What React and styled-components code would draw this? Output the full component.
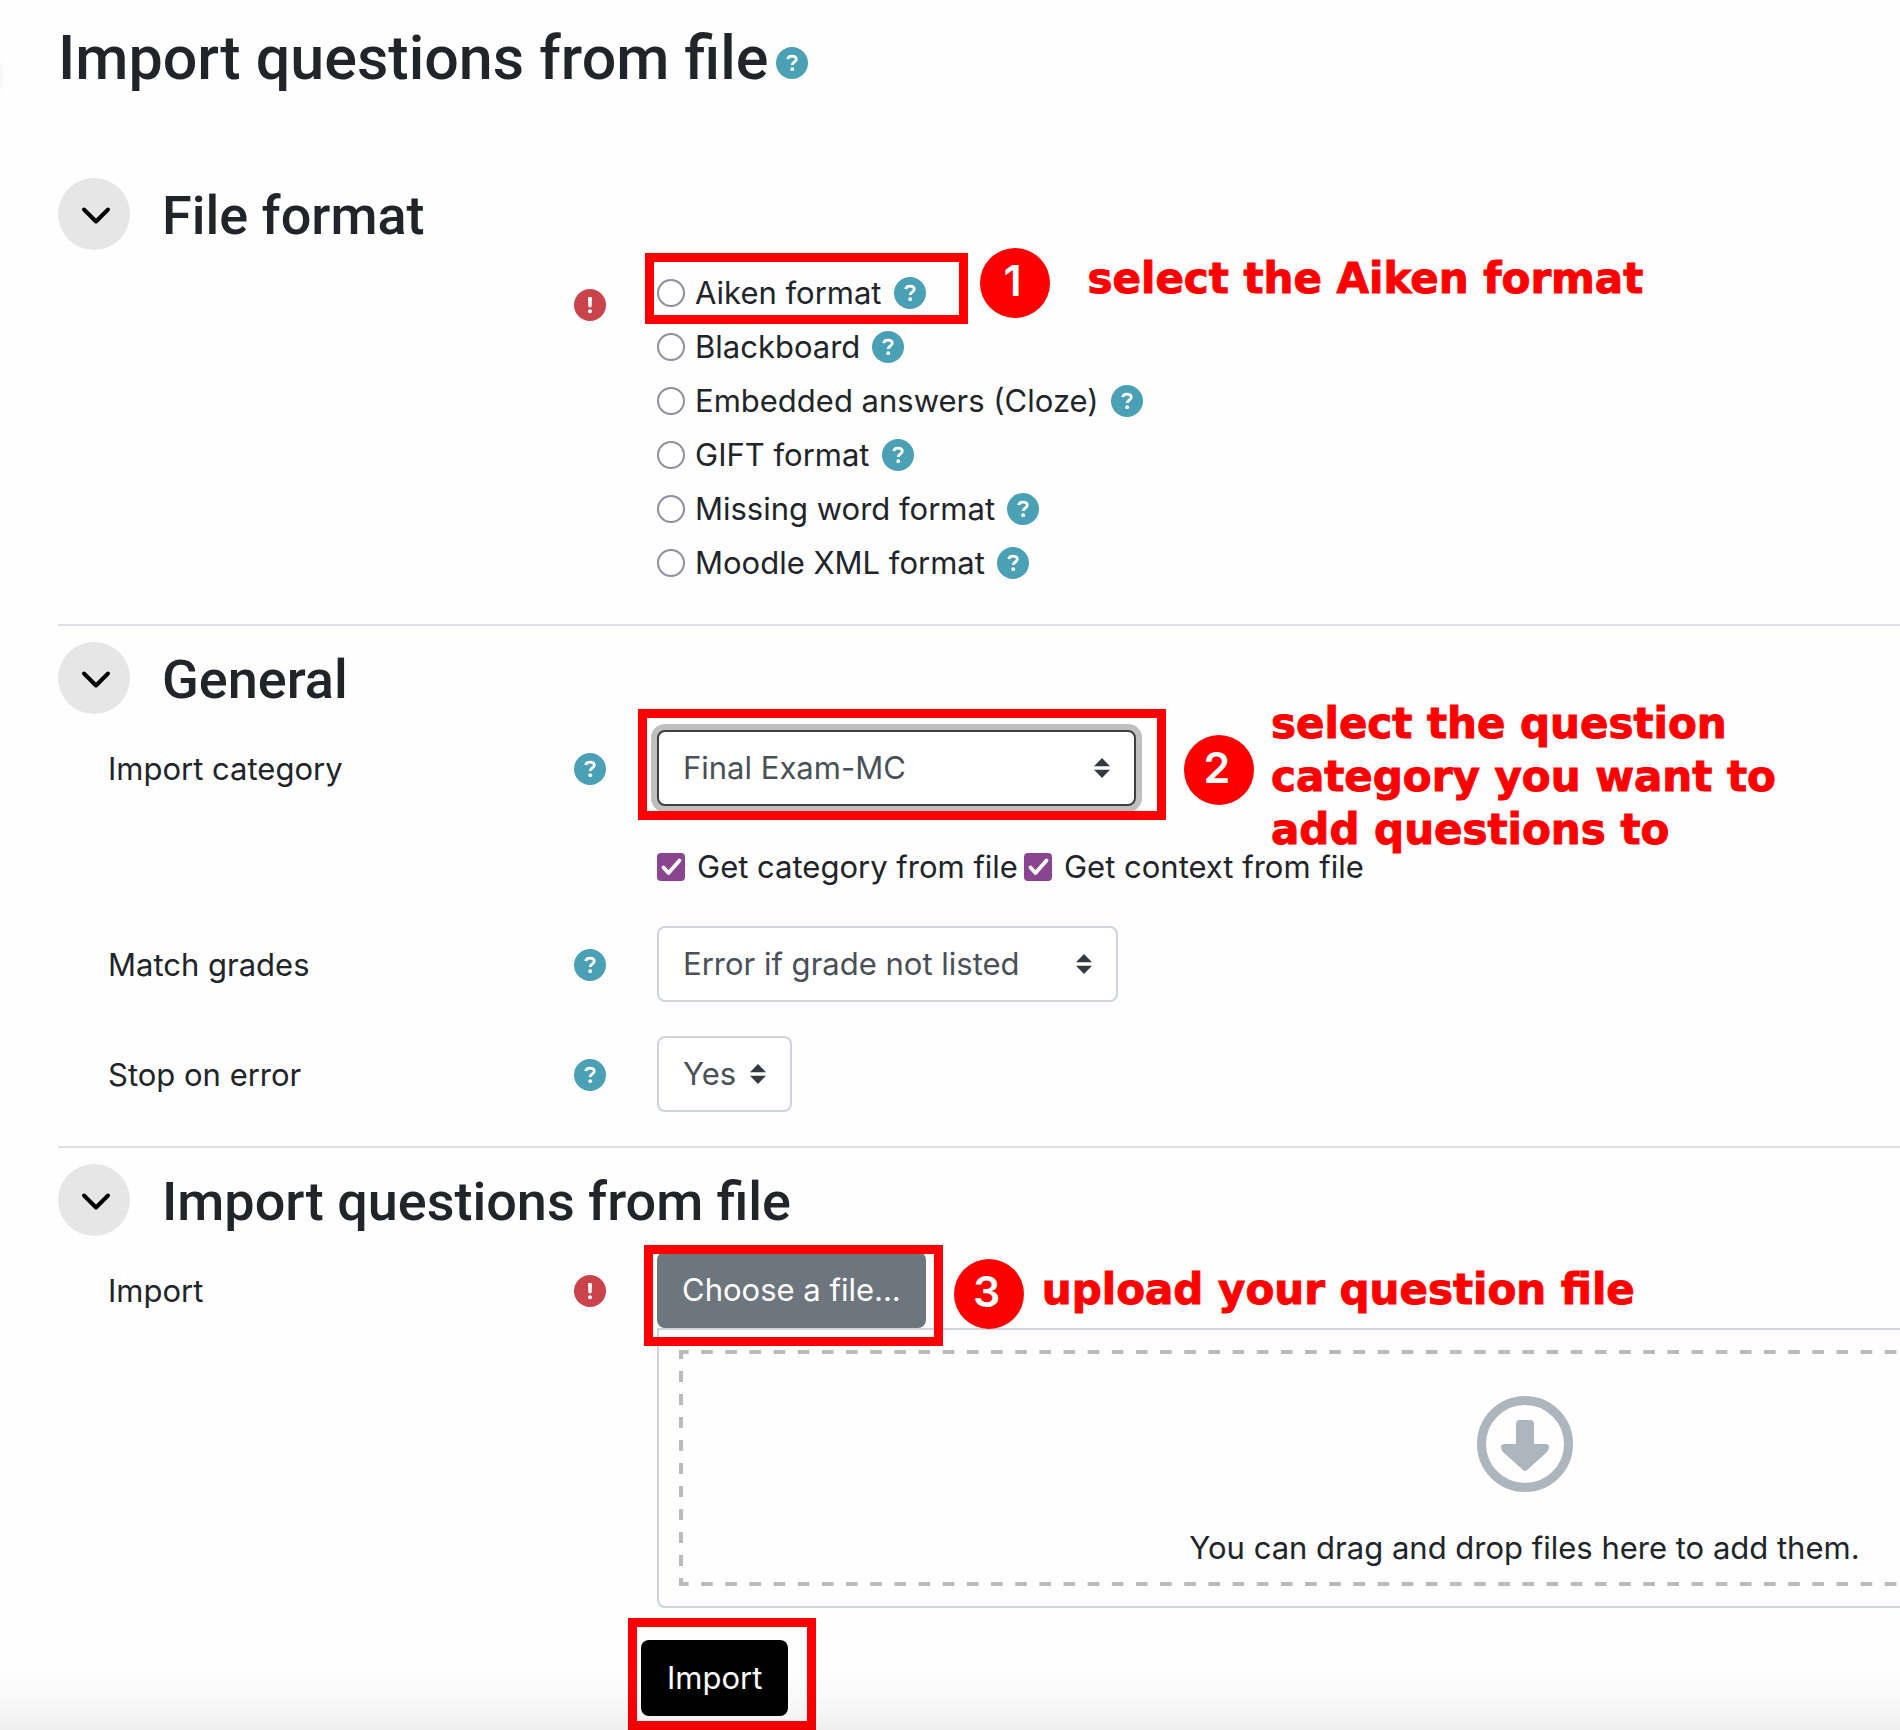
import React from 'react';
import styled, { createGlobalStyle } from 'styled-components';

const GlobalStyle = createGlobalStyle`
* { box-sizing: border-box; }

body {
margin: 0;
background: #fefefe;
color: #212529;
font-family: Inter, "Liberation Sans", sans-serif;
font-size: 31px;
line-height: 48px;
}
`;

const Page = styled.main`
position: relative;
overflow: hidden;
padding: 22px 0 14px 58px;
`;

const DrawerEdge = styled.div`
position: absolute;
top: 38px;
left: -72px;
width: 70px;
height: 70px;
border-radius: 50%;
box-shadow: 0 3px 8px rgba(0, 0, 0, 0.15);
`;

const BottomShade = styled.div`
position: fixed;
left: 0;
right: 0;
bottom: 0;
height: 60px;
background: linear-gradient(rgba(0, 0, 0, 0), rgba(0, 0, 0, 0.02) 50%, rgba(0, 0, 0, 0.06));
pointer-events: none;
`;

const TitleBar = styled.header`
display: flex;
align-items: center;
gap: 8px;
margin-bottom: 84px;
`;

const Title = styled.h1`
margin: 0;
font-family: Roboto, sans-serif;
font-size: 61px;
font-weight: 500;
line-height: 72px;
`;

const TitleHelp = styled.div`
padding-top: 10px;
`;

// the form is wider than the window, the page clips it on the right
const Form = styled.form`
margin-right: -492px;
`;

const Section = styled.section`
padding-bottom: 34px;

& + & {
border-top: 2px solid #dee2e6;
padding-top: 16px;
}

&:last-of-type {
padding-bottom: 32px;
}
`;

const SectionHeader = styled.div`
display: flex;
align-items: center;
gap: 32px;
margin-bottom: 16px;
`;

const SectionTitle = styled.h3`
margin: 0;
padding-top: 4px;
font-family: Roboto, sans-serif;
font-size: 54px;
font-weight: 500;
line-height: 64px;
`;

const Toggle = styled.button`
display: flex;
align-items: center;
justify-content: center;
width: 72px;
height: 72px;
padding: 4px 0 0 4px;
border: 0;
border-radius: 50%;
background: #e6e6e6;
color: #000;
`;

const Rows = styled.div`
display: flex;
flex-direction: column;
gap: 34px;
margin-left: 50px;
`;

const Row = styled.div`
display: grid;
grid-template-columns: 498px 1fr;
column-gap: 51px;
`;

const RowLabel = styled.div`
display: flex;
align-items: center;
justify-content: space-between;
height: 76px;
padding-top: 2px;
`;

const Control = styled.div`
grid-column: 2;
display: flex;
flex-direction: column;
align-items: flex-start;
`;

const IconButton = styled.button`
display: flex;
flex: none;
margin: 0 0 0 auto;
padding: 0;
border: 0;
background: none;
`;

const Required = styled.span`
display: flex;
margin-left: auto;
`;

const Option = styled.div`
position: relative;
display: flex;
align-items: center;
gap: 12px;
height: 54px;
`;

const OptionLabel = styled.label`
display: flex;
align-items: center;
gap: 10px;
`;

const Radio = styled.input`
appearance: none;
width: 28px;
height: 28px;
margin: 0;
border: 2px solid #8f8f9d;
border-radius: 50%;
background: #fff;

&:checked {
border: 8px solid #8a4590;
}
`;

const Checks = styled.div`
display: flex;
align-items: center;
gap: 6px;
height: 52px;
padding-top: 2px;
`;

const CheckLabel = styled.label`
position: relative;
display: flex;
align-items: center;
gap: 12px;
`;

const Checkbox = styled.input`
appearance: none;
width: 28px;
height: 28px;
margin: 0;
border: 2px solid #8f8f9d;
border-radius: 4px;

&:checked {
border-color: #8a4590;
background: #8a4590;
}
`;

const Tick = styled.svg`
position: absolute;
left: 0;
width: 28px;
height: 28px;
pointer-events: none;
`;

const SelectBox = styled.div`
position: relative;
width: ${props => props.$width};
`;

const Select = styled.select`
appearance: none;
display: block;
width: 100%;
height: 76px;
padding: 0 44px 0 24px;
border: 2px solid ${props => props.$focused ? '#3d4043' : '#ced4da'};
border-radius: 8px;
outline: 0;
box-shadow: ${props => props.$focused ? '0 0 0 6px #bfbfbf' : 'none'};
background: #fff;
color: #495057;
font: inherit;
`;

const Arrows = styled.svg`
position: absolute;
top: 28px;
right: 26px;
width: 16px;
height: 20px;
pointer-events: none;
`;

const ChooseButton = styled.button`
height: 76px;
padding: 0 25px;
border: 0;
border-radius: 8px;
background: #6d757d;
color: #fff;
font: inherit;
`;

const FileBox = styled.div`
align-self: stretch;
padding: 20px;
border: 2px solid #ced4da;
border-radius: 0 0 8px 8px;
`;

const dashH = 'linear-gradient(90deg, #bbb 50%, transparent 50%)';
const dashV = 'linear-gradient(#bbb 50%, transparent 50%)';

const DropZone = styled.div`
display: flex;
flex-direction: column;
align-items: center;
gap: 32px;
height: 236px;
padding-top: 46px;
background-image: ${dashH}, ${dashH}, ${dashV}, ${dashV};
background-size: 24px 4px, 24px 4px, 4px 23px, 4px 23px;
background-position: -2px 0, -2px 100%, 0 -2px, 100% -2px;
background-repeat: round no-repeat, round no-repeat, no-repeat repeat, no-repeat repeat;
`;

const DropText = styled.p`
margin: 0;
`;

const SubmitArea = styled.div`
display: flex;
margin-left: 583px;
`;

const SubmitButton = styled.button`
height: 76px;
padding: 0 26px;
border: 0;
border-radius: 8px;
background: #000;
color: #fff;
font: inherit;
`;

const Target = styled.div`
position: relative;
`;

const Frame = styled.div`
position: absolute;
top: ${props => props.$top}px;
right: ${props => props.$right}px;
bottom: ${props => props.$bottom}px;
left: ${props => props.$left}px;
border: 9px solid #f00;
pointer-events: none;
`;

const Callout = styled.div`
position: absolute;
top: ${props => props.$top}px;
left: calc(100% + ${props => props.$offset}px);
display: flex;
align-items: ${props => props.$tall ? 'flex-start' : 'center'};
gap: ${props => props.$gap}px;
`;

const Badge = styled.span`
display: flex;
flex: none;
align-items: center;
justify-content: center;
width: 70px;
height: 70px;
margin-top: ${props => props.$tall ? '38px' : '0'};
padding: 0 4px 6px 0;
border-radius: 50%;
background: #f00;
color: #fff;
font-size: 43px;
font-weight: 600;
`;

const Note = styled.p`
margin: 0;
padding-bottom: 10px;
color: #f00;
font-family: "DejaVu Sans", sans-serif;
font-size: 42px;
font-weight: 700;
line-height: 53px;
white-space: pre;
-webkit-text-stroke: 1px #f00;
`;

const HelpIcon = () => (
    <svg width="32" height="32" viewBox="0 0 32 32" fill="none" aria-hidden="true">
        <circle cx="16" cy="16" r="16" fill="#4aa0b5" />
        <path d="M11.8 12.2c.2-2.2 2-3.1 4.2-3.1 2.500 0 4.300 1.200 4.300 3.200 0 2.900-4.100 2.600-4.100 5.700" stroke="#fff" strokeWidth="2.800" />
        <circle cx="16.200" cy="22.200" r="1.900" fill="#fff" />
    </svg>
);

const Help = ({ about }) => (
    <IconButton type="button" aria-label={'Help with ' + about}><HelpIcon /></IconButton>
);

const RequiredIcon = () => (
    <Required role="img" aria-label="Required">
        <svg width="32" height="32" viewBox="0 0 32 32">
            <circle cx="16" cy="16" r="16" fill="#ca434a" />
            <path d="M14 9.200q0-1.200 1.200-1.200h1.600q1.200 0 1.200 1.200l-.4 8.200q-.1.900-1 .9h-1.200q-.9 0-1-.9z" fill="#fff" />
            <circle cx="16" cy="22.200" r="2" fill="#fff" />
        </svg>
    </Required>
);

const SelectField = ({ id, width, focused, options }) => (
    <SelectBox $width={width}>
        <Select id={id} $focused={focused}>
            {options.map(option => <option key={option}>{option}</option>)}
        </Select>
        <Arrows viewBox="0 0 16 20" fill="#343a40"><path d="M8 0l8 8.200H0zM8 20l8-8.200H0z" /></Arrows>
    </SelectBox>
);

const CheckField = ({ children }) => (
    <CheckLabel>
        <Checkbox type="checkbox" defaultChecked />
        <Tick viewBox="0 0 28 28" fill="none"><path d="M6.500 14.500l5 5.500 11-12.500" stroke="#fff" strokeWidth="3.800" strokeLinecap="round" strokeLinejoin="round" /></Tick>
        {children}
    </CheckLabel>
);

const CollapsibleHeader = ({ title }) => (
    <SectionHeader>
        <Toggle type="button" aria-label={'Collapse ' + title}>
            <svg width="30" height="20" viewBox="0 0 30 20" fill="none">
                <path d="M3 3.500l12 12 12-12" stroke="#000" strokeWidth="4" strokeLinecap="round" strokeLinejoin="round" />
            </svg>
        </Toggle>
        <SectionTitle>{title}</SectionTitle>
    </SectionHeader>
);

const Step = ({ number, top, offset, gap, tall, children }) => (
    <Callout $top={top} $offset={offset} $gap={gap} $tall={tall}>
        <Badge $tall={tall}>{number}</Badge>
        <Note>{children}</Note>
    </Callout>
);

const formats = [
    'Aiken format',
    'Blackboard',
    'Embedded answers (Cloze)',
    'GIFT format',
    'Missing word format',
    'Moodle XML format',
];

const App = () => {
    return (
        <>
            <GlobalStyle />
            <Page>
                <DrawerEdge />
                <TitleBar>
                    <Title>Import questions from file</Title>
                    <TitleHelp><Help about="importing questions" /></TitleHelp>
                </TitleBar>
                <Form>
                    <Section>
                        <CollapsibleHeader title="File format" />
                        <Rows>
                            <Row>
                                <RowLabel><RequiredIcon /></RowLabel>
                                <Control role="radiogroup" aria-label="File format">
                                    {formats.map((format, i) => (
                                        <Option key={format}>
                                            <OptionLabel>
                                                <Radio type="radio" name="format" />
                                                {format}
                                            </OptionLabel>
                                            <Help about={format} />
                                            {i === 0 && (
                                                <Frame $top={-13} $right={-42} $bottom={-4} $left={-12}>
                                                    <Step number="1" top={-14} offset={21} gap={38}>select the Aiken format</Step>
                                                </Frame>
                                            )}
                                        </Option>
                                    ))}
                                </Control>
                            </Row>
                        </Rows>
                    </Section>
                    <Section>
                        <CollapsibleHeader title="General" />
                        <Rows>
                            <Row>
                                <RowLabel>
                                    <label htmlFor="category">Import category</label>
                                    <Help about="Import category" />
                                </RowLabel>
                                <Control>
                                    <Target>
                                        <SelectField id="category" width="479px" focused options={['Final Exam-MC']} />
                                        <Frame $top={-21} $right={-30} $bottom={-14} $left={-19}>
                                            <Step number="2" top={-21} offset={27} gap={17} tall>{'select the question\ncategory you want to\nadd questions to'}</Step>
                                        </Frame>
                                    </Target>
                                </Control>
                            </Row>
                            <Row>
                                <Control>
                                    <Checks>
                                        <CheckField>Get category from file</CheckField>
                                        <CheckField>Get context from file</CheckField>
                                    </Checks>
                                </Control>
                            </Row>
                            <Row>
                                <RowLabel>
                                    <label htmlFor="grades">Match grades</label>
                                    <Help about="Match grades" />
                                </RowLabel>
                                <Control>
                                    <SelectField id="grades" width="461px" options={['Error if grade not listed', 'Nearest grade if not listed']} />
                                </Control>
                            </Row>
                            <Row>
                                <RowLabel>
                                    <label htmlFor="stop">Stop on error</label>
                                    <Help about="Stop on error" />
                                </RowLabel>
                                <Control>
                                    <SelectField id="stop" width="135px" options={['Yes', 'No']} />
                                </Control>
                            </Row>
                        </Rows>
                    </Section>
                    <Section>
                        <CollapsibleHeader title="Import questions from file" />
                        <Rows>
                            <Row>
                                <RowLabel>
                                    <label htmlFor="choose">Import</label>
                                    <RequiredIcon />
                                </RowLabel>
                                <Control>
                                    <Target>
                                        <ChooseButton id="choose" type="button">Choose a file...</ChooseButton>
                                        <Frame $top={-7} $right={-17} $bottom={-18} $left={-13}>
                                            <Step number="3" top={5} offset={20} gap={18}>upload your question file</Step>
                                        </Frame>
                                    </Target>
                                    <FileBox>
                                        <DropZone>
                                            <svg width="96" height="96" viewBox="0 0 96 96" fill="#adb5bd" aria-hidden="true">
                                                <circle cx="48" cy="48" r="43.500" fill="none" stroke="#adb5bd" strokeWidth="9" />
                                                <path d="M39 28q0-4 4-4h10q4 0 4 4v20h12q3 0 3 3 0 3-2.500 5.500L50 74q-2 2-4 0L26.500 56.500Q24 54 24 51q0-3 3-3h12z" />
                                            </svg>
                                            <DropText>You can drag and drop files here to add them.</DropText>
                                        </DropZone>
                                    </FileBox>
                                </Control>
                            </Row>
                        </Rows>
                    </Section>
                    <SubmitArea>
                        <Target>
                            <SubmitButton type="submit">Import</SubmitButton>
                            <Frame $top={-22} $right={-28} $bottom={-14} $left={-13} />
                        </Target>
                    </SubmitArea>
                </Form>
                <BottomShade />
            </Page>
        </>
    )
}

export default App;
